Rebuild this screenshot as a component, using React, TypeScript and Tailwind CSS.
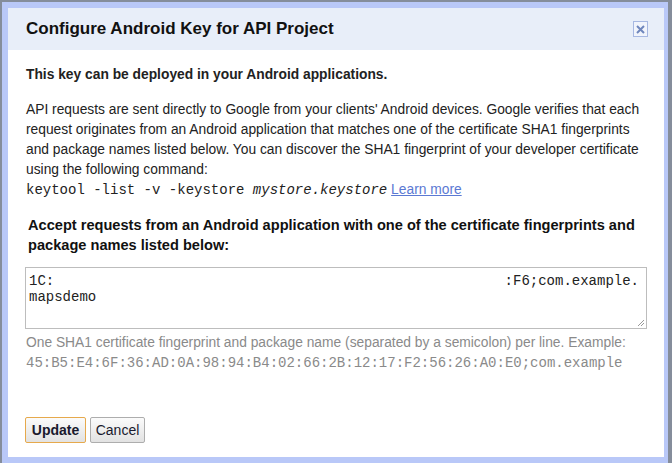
const sans = "font-['Liberation_Sans',Arial,sans-serif]";
const mono = "font-['Liberation_Mono','Courier_New',monospace]";

function CloseBox() {
  return (
    <div className="flex h-[16px] w-[15px] items-center justify-center border border-[#a7b8e2] bg-[#f1f4fc]">
      <svg width="9" height="9" viewBox="0 0 9 9">
        <path d="M1 1 L8 8 M8 1 L1 8" stroke="#6f86bd" strokeWidth="2" />
      </svg>
    </div>
  );
}

export default function App() {
  return (
    <div className={`h-[463px] w-[672px] overflow-hidden bg-[#858d9b] pl-[2px] pr-[4px] pt-[2px] ${sans}`}>
      <div className="h-full bg-[#b9c8f8] pb-[6px] pl-[6px] pr-[4px] pt-[6px]">
        <div className="flex h-full flex-col bg-white">
          {/* ── Title bar ── */}
          <div className="flex h-[42px] items-center justify-between bg-[#e8eef9] pl-[18px] pr-[16px]">
            <h1 className="text-[17px] font-bold leading-[20px] text-[#111]">
              Configure Android Key for API Project
            </h1>
            <CloseBox />
          </div>

          {/* ── Body ── */}
          <div className="flex flex-1 flex-col pl-[18px] pr-[16px] text-[13.8px] leading-[20px] text-[#222]">
            <p className="mt-[15px] font-bold">
              This key can be deployed in your Android applications.
            </p>
            <p className="mt-[15px]">
              API requests are sent directly to Google from your clients' Android devices. Google verifies that each
              request originates from an Android application that matches one of the certificate SHA1 fingerprints
              and package names listed below. You can discover the SHA1 fingerprint of your developer certificate
              using the following command:
            </p>
            <p>
              <span className={`text-[14px] ${mono}`}>
                keytool -list -v -keystore <i>mystore.keystore</i>
              </span>{" "}
              <a className="text-[#5b79d3] underline" href="#">
                Learn more
              </a>
            </p>

            <div className="mt-[15px] pl-[2px]">
              <p className="text-[14.6px] font-bold leading-[20px] text-[#111]">
                Accept requests from an Android application with one of the certificate fingerprints and package
                names listed below:
              </p>
            </div>

            <div
              className={`relative ml-[-1px] mt-[12px] h-[62px] w-[622px] border border-[#bdbdbd] pl-[3px] pr-[7px] pt-[5px] text-[14px] leading-[16px] text-[#222] ${mono}`}
            >
              <div className="flex justify-between">
                <span>1C:</span>
                <span>:F6;com.example.</span>
              </div>
              <div>mapsdemo</div>
              <svg className="absolute bottom-[1px] right-[1px]" width="8" height="8" viewBox="0 0 8 8">
                <path d="M7 1 L1 7 M7 4 L4 7" stroke="#999" strokeWidth="1" />
              </svg>
            </div>

            <p className="mt-[4px] text-[#8a8a8a]">
              One SHA1 certificate fingerprint and package name (separated by a semicolon) per line. Example:
            </p>
            <p className={`text-[14px] text-[#8a8a8a] ${mono}`}>
              45:B5:E4:6F:36:AD:0A:98:94:B4:02:66:2B:12:17:F2:56:26:A0:E0;com.example
            </p>

            {/* ── Actions ── */}
            <div className="ml-[-1px] mt-[44px] flex gap-[4px]">
              <button className="h-[26px] w-[61px] rounded-[2px] border border-[#e6a94c] bg-gradient-to-b from-[#fbfbfb] to-[#e2e2e2] text-[14px] font-bold text-[#1a1a2e]">
                Update
              </button>
              <button className="h-[26px] w-[55px] rounded-[2px] border border-[#adadad] bg-gradient-to-b from-[#fbfbfb] to-[#e2e2e2] text-[14px] text-[#1a1a2e]">
                Cancel
              </button>
            </div>
          </div>
        </div>
      </div>
    </div>
  );
}
